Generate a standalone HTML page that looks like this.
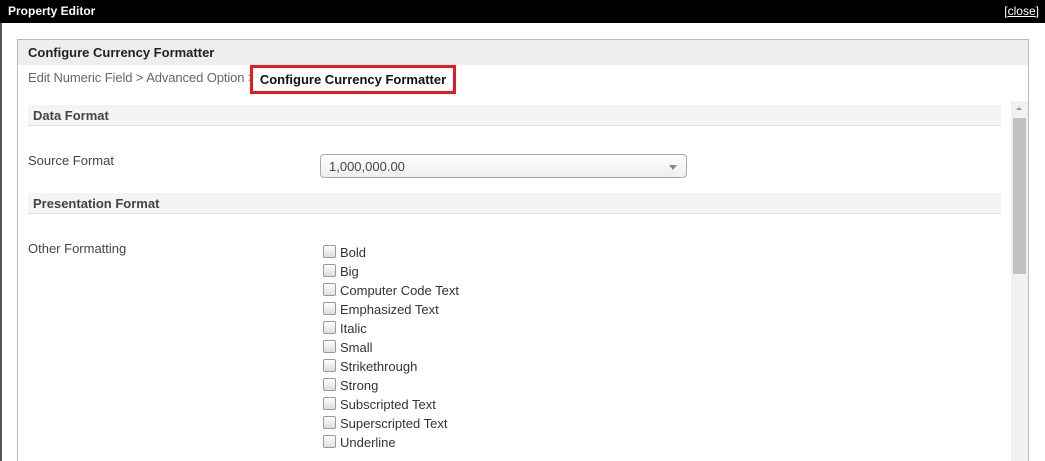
<!DOCTYPE html>
<html><head><style>
html,body{margin:0;width:1045px;height:461px;overflow:hidden}
body{background:#fff;font-family:"Liberation Sans",Arial,sans-serif;position:relative}
.top{position:absolute;left:0;top:0;width:1045px;height:23px;background:#000;color:#fff;font-size:12px}
.top .t{position:absolute;left:8px;top:4px;font-weight:bold}
.top .c{position:absolute;right:6px;top:4px}
.top .c u{text-decoration:underline}
.lb{position:absolute;left:0;top:23px;width:2px;height:438px;background:#555}
.panel{position:absolute;left:17px;top:39px;width:1010px;height:430px;border:1px solid #bbb}
.ph{height:25px;background:#eee;font-size:13px;font-weight:bold;color:#222;line-height:26px;padding-left:10px}
.bc{position:absolute;left:10px;top:30px;font-size:13px;color:#666;letter-spacing:-0.1px}
.red{position:absolute;left:232px;top:25px;width:200px;height:23px;border:3px solid #e8191f;background:#fff;font-size:13px;font-weight:bold;color:#111;line-height:23px;text-align:center}
.sec{position:absolute;left:10px;width:973px;height:21px;background:#f4f4f4;border-bottom:1px solid #ddd;font-size:13px;font-weight:bold;color:#444;line-height:21px;padding-left:5px;box-sizing:border-box}
.lbl{position:absolute;left:10px;font-size:13px;color:#444}
.sel{position:absolute;left:302px;top:114px;width:367px;height:24px;border:1px solid #aaa;border-radius:4px;background:linear-gradient(#fff,#eee);font-size:13px;color:#444;line-height:24px;padding-left:8px;box-sizing:border-box}
.sel:after{content:"";position:absolute;right:9px;top:10px;border:4px solid transparent;border-top:5px solid #888}
.cb{position:absolute;left:305px;font-size:13px;color:#333;height:19px;line-height:19px}
.cb i{display:inline-block;width:11px;height:11px;border:1px solid #999;border-radius:2px;background:linear-gradient(#fff,#ddd);vertical-align:-1px;margin-right:4px}
.sb{position:absolute;left:993px;top:61px;width:17px;height:370px;background:#f1f1f1}
.th{position:absolute;left:2px;top:17px;width:13px;height:156px;background:#c1c1c1}
.ua{position:absolute;left:5px;top:6px;border:3px solid transparent;border-bottom:3px solid #999;border-top:0}
</style></head><body>
<div class="top"><span class="t">Property Editor</span><span class="c">[<u>close</u>]</span></div>
<div class="lb"></div>
<div class="panel">
<div class="ph">Configure Currency Formatter</div>
<div class="bc">Edit Numeric Field &gt; Advanced Option &gt;</div>
<div class="red">Configure Currency Formatter</div>
<div class="sec" style="top:65px">Data Format</div>
<div class="lbl" style="top:113px">Source Format</div>
<div class="sel">1,000,000.00</div>
<div class="sec" style="top:153px">Presentation Format</div>
<div class="lbl" style="top:201px">Other Formatting</div>
<div class="cb" style="top:203px"><i></i>Bold</div>
<div class="cb" style="top:222px"><i></i>Big</div>
<div class="cb" style="top:241px"><i></i>Computer Code Text</div>
<div class="cb" style="top:260px"><i></i>Emphasized Text</div>
<div class="cb" style="top:279px"><i></i>Italic</div>
<div class="cb" style="top:298px"><i></i>Small</div>
<div class="cb" style="top:317px"><i></i>Strikethrough</div>
<div class="cb" style="top:336px"><i></i>Strong</div>
<div class="cb" style="top:355px"><i></i>Subscripted Text</div>
<div class="cb" style="top:374px"><i></i>Superscripted Text</div>
<div class="cb" style="top:393px"><i></i>Underline</div>
<div class="sb"><div class="ua"></div><div class="th"></div></div>
</div>
</body></html>
